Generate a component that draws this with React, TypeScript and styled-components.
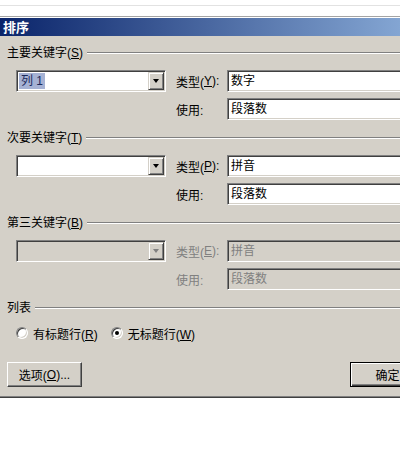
import React from 'react';
import styled, { createGlobalStyle } from 'styled-components';

const GlobalStyle = createGlobalStyle`
  html, body {
    margin: 0;
    padding: 0;
    background: #fff;
    overflow: hidden;
  }
  body {
    font-family: "Liberation Sans", "Noto Sans CJK SC", sans-serif;
    font-size: 12px;
    color: #000;
  }
`;

const Page = styled.div`
  width: 400px;
  height: 449px;
  overflow: hidden;
  background: #fff;
`;

const TopStrip = styled.div`
  height: 16px;
  background: linear-gradient(
    to bottom,
    #fff 5px,
    #e2e2e2 5px,
    #e2e2e2 6px,
    #fff 6px
  );
  border-bottom: 1px solid #a4a4a4;
  margin-bottom: 1px;
`;

const Dialog = styled.div`
  width: 513px;
`;

const TitleBar = styled.div`
  height: 18px;
  line-height: 18px;
  padding-left: 3px;
  background: linear-gradient(to right, #0a246a, #a6caf0);
  color: #fff;
  font-weight: bold;
  font-size: 13px;
  font-family: "Noto Sans CJK SC", sans-serif;
`;

const Body = styled.div`
  background: #d4d0c8;
  padding: 10px 7px 9px 7px;
  border-bottom: 1px solid #808080;
  box-shadow: 0 1px 0 #404040;
`;

const SectionHeader = styled.div<{ $first?: boolean }>`
  display: flex;
  align-items: center;
  height: 14px;
  gap: 4px;
  margin-top: ${p => (p.$first ? '0' : '11px')};
  white-space: nowrap;
  line-height: 14px;
`;

const EtchedLine = styled.div`
  flex: 1;
  height: 0;
  border-top: 1px solid #808080;
  border-bottom: 1px solid #fff;
`;

const KeyGrid = styled.div`
  display: grid;
  grid-template-columns: 150px 61px 1fr;
  grid-auto-rows: 22px;
  row-gap: 6px;
  margin: 10px 0 0 9px;
`;

const FieldLabel = styled.div<{ $disabled?: boolean }>`
  padding-left: 10px;
  display: flex;
  align-items: center;
  color: ${p => (p.$disabled ? '#808080' : '#000')};
  white-space: nowrap;
`;

const Sunken = styled.div<{ $disabled?: boolean }>`
  box-sizing: border-box;
  height: 22px;
  border: 1px solid;
  border-color: #808080 #fff #fff #808080;
  box-shadow: inset 1px 1px 0 #404040, inset -1px -1px 0 #d4d0c8;
  background: ${p => (p.$disabled ? '#d4d0c8' : '#fff')};
  color: ${p => (p.$disabled ? '#808080' : '#000')};
  padding: 1px;
  display: flex;
  align-items: center;
`;

const ComboValue = styled.div`
  flex: 1;
  padding-left: 1px;
  display: flex;
  align-items: center;
`;

const Selected = styled.span`
  background: #a6b2d4;
  color: #1c2a5c;
  padding: 0 2px;
  line-height: 16px;
`;

const DropButton = styled.div`
  box-sizing: border-box;
  width: 16px;
  height: 18px;
  background: #d4d0c8;
  border: 1px solid;
  border-color: #d4d0c8 #404040 #404040 #d4d0c8;
  box-shadow: inset 1px 1px 0 #fff, inset -1px -1px 0 #808080;
  display: flex;
  align-items: center;
  justify-content: center;
`;

const Arrow = styled.div<{ $disabled?: boolean }>`
  width: 0;
  height: 0;
  border-left: 3.5px solid transparent;
  border-right: 3.5px solid transparent;
  border-top: 4px solid ${p => (p.$disabled ? '#808080' : '#000')};
`;

const BoxText = styled.span`
  padding-left: 2px;
  line-height: 16px;
`;

const RadioRow = styled.div`
  display: flex;
  align-items: center;
  height: 14px;
  margin: 11px 0 0 9px;
`;

const RadioItem = styled.label`
  display: flex;
  align-items: center;
  gap: 5px;
  margin-right: 13px;
  white-space: nowrap;
`;

const RadioCircle = styled.span<{ $checked?: boolean }>`
  box-sizing: border-box;
  width: 12px;
  height: 12px;
  border-radius: 50%;
  border: 1px solid;
  border-color: #808080 #fff #fff #808080;
  box-shadow: inset 1px 1px 0 #404040, inset -1px -1px 0 #d4d0c8;
  background: #fff;
  display: flex;
  align-items: center;
  justify-content: center;
  &::after {
    content: '';
    width: 4px;
    height: 4px;
    border-radius: 50%;
    background: ${p => (p.$checked ? '#000' : 'transparent')};
  }
`;

const ButtonRow = styled.div`
  display: flex;
  gap: 6px;
  margin-top: 22px;
`;

const Spacer = styled.div`
  flex: 1;
`;

const Button = styled.div<{ $default?: boolean }>`
  box-sizing: border-box;
  width: 75px;
  height: 25px;
  display: flex;
  align-items: center;
  justify-content: center;
  background: #d4d0c8;
  border: 1px solid;
  border-color: ${p =>
    p.$default ? '#000' : '#fff #404040 #404040 #fff'};
  box-shadow: ${p =>
    p.$default
      ? 'inset 1px 1px 0 #fff, inset -1px -1px 0 #404040, inset -2px -2px 0 #808080'
      : 'inset -1px -1px 0 #808080'};
  white-space: nowrap;
`;

interface KeySectionProps {
  title: string;
  hotkey: string;
  typeKey: string;
  typeValue: string;
  comboValue?: string;
  disabled?: boolean;
  first?: boolean;
}

function KeySection({
  title,
  hotkey,
  typeKey,
  typeValue,
  comboValue,
  disabled,
  first,
}: KeySectionProps) {
  return (
    <>
      <SectionHeader $first={first}>
        <span>
          {title}(<u>{hotkey}</u>)
        </span>
        <EtchedLine />
      </SectionHeader>
      <KeyGrid>
        <Sunken $disabled={disabled}>
          <ComboValue>
            {comboValue && <Selected>{comboValue}</Selected>}
          </ComboValue>
          <DropButton>
            <Arrow $disabled={disabled} />
          </DropButton>
        </Sunken>
        <FieldLabel $disabled={disabled}>
          类型(<u>{typeKey}</u>):
        </FieldLabel>
        <Sunken $disabled={disabled}>
          <BoxText>{typeValue}</BoxText>
        </Sunken>
        <div />
        <FieldLabel $disabled={disabled}>使用:</FieldLabel>
        <Sunken $disabled={disabled}>
          <BoxText>段落数</BoxText>
        </Sunken>
      </KeyGrid>
    </>
  );
}

export default function App() {
  return (
    <Page>
      <GlobalStyle />
      <TopStrip />
      <Dialog>
        <TitleBar>排序</TitleBar>
        <Body>
          <KeySection
            first
            title="主要关键字"
            hotkey="S"
            typeKey="Y"
            typeValue="数字"
            comboValue="列 1"
          />
          <KeySection
            title="次要关键字"
            hotkey="T"
            typeKey="P"
            typeValue="拼音"
          />
          <KeySection
            disabled
            title="第三关键字"
            hotkey="B"
            typeKey="E"
            typeValue="拼音"
          />
          <SectionHeader>
            <span>列表</span>
            <EtchedLine />
          </SectionHeader>
          <RadioRow>
            <RadioItem>
              <RadioCircle />
              <span>
                有标题行(<u>R</u>)
              </span>
            </RadioItem>
            <RadioItem>
              <RadioCircle $checked />
              <span>
                无标题行(<u>W</u>)
              </span>
            </RadioItem>
          </RadioRow>
          <ButtonRow>
            <Button>
              选项(<u>O</u>)...
            </Button>
            <Spacer />
            <Button $default>确定</Button>
            <Button>取消</Button>
          </ButtonRow>
        </Body>
      </Dialog>
    </Page>
  );
}
